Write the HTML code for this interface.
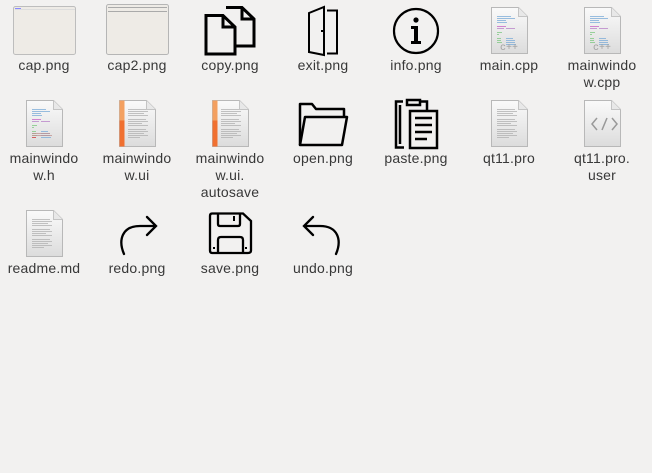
<!DOCTYPE html>
<html><head><meta charset="utf-8"><style>
body{margin:0;width:652px;height:473px;background:#f2f1f0;font-family:"Liberation Sans","DejaVu Sans",sans-serif;overflow:hidden;position:relative}
.l{position:absolute;width:92px;text-align:center;font-size:14px;line-height:17px;color:#383838;letter-spacing:0.2px}
svg{position:absolute;overflow:visible}
</style></head><body>
<svg width="652" height="473" style="left:0;top:0">
<defs>
<linearGradient id="g" x1="0" y1="0" x2="0" y2="1"><stop offset="0" stop-color="#fafafa"/><stop offset="1" stop-color="#dcdcdc"/></linearGradient>
<g id="doc"><path d="M0.5 0.5H27.5L36.5 9.5V46.5H0.5Z" fill="url(#g)" stroke="#b8b8b8"/><path d="M27.5 0.5V9.5H36.5" fill="#e8e8e8" stroke="#c4c4c4"/></g>
<g id="txt" stroke="#b0b0b0" stroke-width="0.7" transform="translate(0,0.5)"><path d="M7 9h18M7 11h20M7 13h16M7 15h20M7 19h18M7 21h20M7 23h14M7 25h20M7 29h18M7 31h20M7 33h16M7 35h20M7 37h12"/></g>
<g id="code" stroke-width="0.8" transform="translate(0,0.5)"><path d="M6 9h14M6 11h18M6 13h9M6 15h10" stroke="#7aaad8"/><path d="M6 19h9" stroke="#c868c8"/><path d="M6 21h7M15 21h9" stroke="#b880c8"/><path d="M6 25h5M6 27h2" stroke="#7cc880"/><path d="M6 31h4M6 33h4M6 35h5" stroke="#7cc880"/><path d="M15 31h7M15 33h9M15 35h9M15 37h10" stroke="#7aaad8"/></g>
</defs>
<rect x="13.5" y="6.5" width="62" height="48" rx="2" fill="#eeebe6" stroke="#bdbdbd"/>
<path d="M15 9.5h60" stroke="#ddd"/><rect x="15" y="8" width="6" height="1" fill="#88f"/>
<rect x="106.5" y="4.5" width="62" height="50" rx="2" fill="#eeebe6" stroke="#b5b5b5"/>
<path d="M108 7.5h59M108 11.5h59" stroke="#aaa"/>
<g fill="none" stroke="#000" stroke-width="3">
<path d="M226 7.5H242L254 19V46H236"/><path d="M242 7.5V19H254"/>
<path d="M206 15.5H223L235 27V54H206Z"/><path d="M223 15.5V27H235"/>
</g>
<path d="M309 13L324 7V55L309 52Z" fill="none" stroke="#000" stroke-width="2"/>
<path d="M327 10.5H337V53.5H327" fill="none" stroke="#000" stroke-width="2"/>
<rect x="321" y="30" width="2" height="2"/>
<circle cx="416" cy="31" r="22" fill="none" stroke="#000" stroke-width="2.2"/>
<circle cx="416" cy="20" r="2.6"/>
<path d="M411 26h7v15h3v3h-10v-3h3v-12h-3z"/>
<use href="#doc" x="491" y="7"/><use href="#code" x="491" y="7"/>
<text x="509" y="50" text-anchor="middle" font-size="10" fill="#a0a0a0" font-family="Liberation Mono,monospace">c++</text>
<use href="#doc" x="584" y="7"/><use href="#code" x="584" y="7"/>
<text x="602" y="50" text-anchor="middle" font-size="10" fill="#a0a0a0" font-family="Liberation Mono,monospace">c++</text>
<use href="#doc" x="26" y="100"/><use href="#code" x="26" y="100"/>
<path d="M32 137.5h4" stroke="#d04040" stroke-width="0.8"/><path d="M32 133.5h18M32 135.5h20" stroke="#c09090" stroke-width="0.8"/>
<use href="#doc" x="119" y="100"/><rect x="119.5" y="100.5" width="5" height="46" fill="#f07030"/><rect x="119.5" y="100.5" width="5" height="20" fill="#f3a060"/><use href="#txt" x="121" y="100"/>
<use href="#doc" x="212" y="100"/><rect x="212.5" y="100.5" width="5" height="46" fill="#f07030"/><rect x="212.5" y="100.5" width="5" height="20" fill="#f3a060"/><use href="#txt" x="214" y="100"/>
<g fill="none" stroke="#000" stroke-width="2.5" stroke-linejoin="round">
<path d="M300 145V104H312L316 109H344V117"/>
<path d="M300 145L305 117H347L342 145Z"/>
</g>
<g fill="none" stroke="#000" stroke-width="2.5">
<path d="M403 101.5h-7v46h8"/><path d="M400 105v39"/><path d="M420 101.5h7v11"/>
<rect x="407" y="100" width="13" height="5" fill="#f2f1f0"/>
<rect x="410" y="111" width="27" height="37" fill="#f2f1f0"/>
<path d="M415 118h17M415 125h17M415 132h17M415 139h12"/>
</g>
<use href="#doc" x="491" y="100"/><use href="#txt" x="490" y="100"/>
<use href="#doc" x="584" y="100"/>
<path d="M597 118l-5 6 5 6M607 118l-5 12M612 118l5 6-5 6" fill="none" stroke="#999" stroke-width="1.5"/>
<use href="#doc" x="26" y="210"/><use href="#txt" x="25" y="210"/>
<g fill="none" stroke="#000" stroke-width="2.3" stroke-linecap="round">
<path d="M124 254C118 240 122 226 140 226H155M147 217L156 226L147 235"/>
<path d="M336 254C342 240 338 226 320 226H305M313 217L304 226L313 235"/>
</g>
<g fill="none" stroke="#000" stroke-width="2.3">
<path d="M212 213.5H243L251 221V250.5Q251 253 248 253H212Q210 253 210 250.5V216Q210 213.5 212 213.5Z"/>
<path d="M218 214V224Q218 226 220 226H238Q240 226 240 224V214"/>
<path d="M218 253V240Q218 237 221 237H240Q243 237 243 240V253"/>
</g>
<rect x="233" y="216" width="2" height="5"/><rect x="213" y="247" width="2" height="2"/><rect x="245" y="247" width="2" height="2"/>
</svg>
<div class="l" style="left:-2px;top:57px">cap.png</div>
<div class="l" style="left:91px;top:57px">cap2.png</div>
<div class="l" style="left:184px;top:57px">copy.png</div>
<div class="l" style="left:277px;top:57px">exit.png</div>
<div class="l" style="left:370px;top:57px">info.png</div>
<div class="l" style="left:463px;top:57px">main.cpp</div>
<div class="l" style="left:556px;top:57px">mainwindo<br>w.cpp</div>
<div class="l" style="left:-2px;top:150px">mainwindo<br>w.h</div>
<div class="l" style="left:91px;top:150px">mainwindo<br>w.ui</div>
<div class="l" style="left:184px;top:150px">mainwindo<br>w.ui.<br>autosave</div>
<div class="l" style="left:277px;top:150px">open.png</div>
<div class="l" style="left:370px;top:150px">paste.png</div>
<div class="l" style="left:463px;top:150px">qt11.pro</div>
<div class="l" style="left:556px;top:150px">qt11.pro.<br>user</div>
<div class="l" style="left:-2px;top:260px">readme.md</div>
<div class="l" style="left:91px;top:260px">redo.png</div>
<div class="l" style="left:184px;top:260px">save.png</div>
<div class="l" style="left:277px;top:260px">undo.png</div>
</body></html>
